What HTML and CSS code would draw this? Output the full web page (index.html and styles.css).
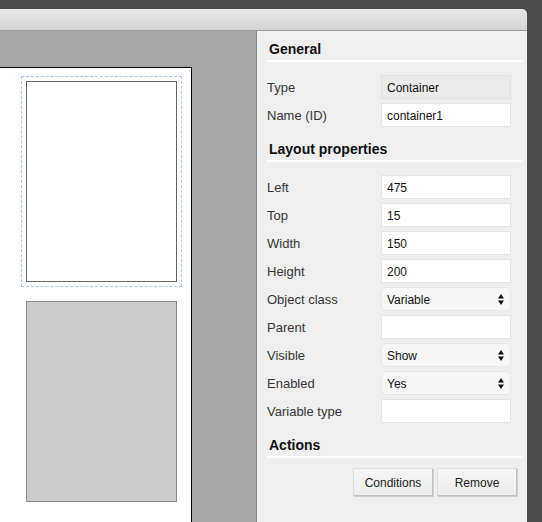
FILE: index.html
```html
<!DOCTYPE html>
<html>
<head>
<meta charset="utf-8">
<link rel="stylesheet" href="styles.css">
</head>
<body>
<div class="window">
  <div class="titlebar"></div>
  <div class="main">
    <div class="canvas">
      <div class="page">
        <div class="selection">
          <div class="container-box"></div>
        </div>
        <div class="gray-box"></div>
      </div>
    </div>
    <div class="panel">
      <div class="section-title">General</div>
      <div class="rows">
        <div class="label">Type</div><div class="field readonly">Container</div>
        <div class="label">Name (ID)</div><div class="field">container1</div>
      </div>
      <div class="section-title">Layout properties</div>
      <div class="rows">
        <div class="label">Left</div><div class="field">475</div>
        <div class="label">Top</div><div class="field">15</div>
        <div class="label">Width</div><div class="field">150</div>
        <div class="label">Height</div><div class="field">200</div>
        <div class="label">Object class</div><div class="field select"><span>Variable</span><svg class="arrows" width="6" height="11" viewBox="0 0 6 11"><path d="M3 0 L6 4.5 L0 4.5 Z M0 6.5 L6 6.5 L3 11 Z" fill="#111"/></svg></div>
        <div class="label">Parent</div><div class="field"></div>
        <div class="label">Visible</div><div class="field select"><span>Show</span><svg class="arrows" width="6" height="11" viewBox="0 0 6 11"><path d="M3 0 L6 4.5 L0 4.5 Z M0 6.5 L6 6.5 L3 11 Z" fill="#111"/></svg></div>
        <div class="label">Enabled</div><div class="field select"><span>Yes</span><svg class="arrows" width="6" height="11" viewBox="0 0 6 11"><path d="M3 0 L6 4.5 L0 4.5 Z M0 6.5 L6 6.5 L3 11 Z" fill="#111"/></svg></div>
        <div class="label">Variable type</div><div class="field"></div>
      </div>
      <div class="section-title">Actions</div>
      <div class="buttons">
        <div class="btn">Conditions</div>
        <div class="btn">Remove</div>
      </div>
    </div>
  </div>
</div>
</body>
</html>
```
FILE: styles.css
```css
html, body {
  margin: 0;
  padding: 0;
  background: #4b4b4b;
  overflow: hidden;
  font-family: "Liberation Sans", Arial, sans-serif;
}
.window {
  margin-top: 9px;
  width: 527px;
  height: 513px;
  border-top-right-radius: 5px;
  overflow: hidden;
  display: flex;
  flex-direction: column;
}
.titlebar {
  height: 21px;
  flex: none;
  background: linear-gradient(#e8e8e8, #d3d3d3);
  border-bottom: 1px solid #9c9c9c;
}
.main {
  flex: 1;
  display: flex;
  min-height: 0;
}
.canvas {
  width: 256px;
  flex: none;
  background: #a6a6a6;
  padding-top: 36px;
  box-sizing: border-box;
  display: flex;
  flex-direction: column;
}
.page {
  flex: 1;
  width: 192px;
  box-sizing: border-box;
  background: #fff;
  border-top: 1px solid #000;
  border-right: 1px solid #000;
  padding: 8px 0 0 21px;
}
.selection {
  width: 161px;
  box-sizing: border-box;
  border: 1px dashed #a3c6f6;
  padding: 4px;
}
.container-box {
  width: 151px;
  height: 201px;
  box-sizing: border-box;
  border: 1px solid #666;
  background: #fff;
}
.gray-box {
  margin: 14px 0 0 5px;
  width: 151px;
  height: 201px;
  box-sizing: border-box;
  border: 1px solid #888;
  background: #ccc;
}
.panel {
  flex: 1;
  background: #efefef;
  border-left: 1px solid #8a8a8a;
  padding: 10px 5px 0 10px;
}
.section-title {
  font-size: 14px;
  font-weight: bold;
  line-height: 17px;
  color: #111;
  padding: 0 0 2px 2px;
  border-bottom: 2px solid #fff;
  margin-bottom: 13px;
}
.rows {
  display: grid;
  grid-template-columns: 114px 130px;
  grid-auto-rows: 24px;
  row-gap: 4px;
  margin-bottom: 14px;
}
.label {
  font-size: 13px;
  color: #363636;
  display: flex;
  align-items: center;
}
.field {
  box-sizing: border-box;
  height: 24px;
  border: 1px solid #e4e4e4;
  background: #fff;
  font-size: 12px;
  color: #111;
  padding: 1px 5px 0;
  display: flex;
  align-items: center;
}
.field.readonly {
  background: #ebebeb;
  border-color: #e1e1e1;
}
.field.select {
  background: #f7f7f7;
  border-color: #e6e6e6;
  border-radius: 5px;
  justify-content: space-between;
  padding-right: 5px;
}
.arrows {
  display: block;
  margin-right: 1px;
}
.buttons {
  display: flex;
  justify-content: flex-end;
  gap: 4px;
  padding-right: 5px;
  margin-top: -3px;
}
.btn {
  width: 80px;
  height: 28px;
  box-sizing: border-box;
  border: 1px solid #dcdcdc;
  border-right-color: #c2c2c2;
  border-bottom-color: #c2c2c2;
  box-shadow: 1px 1px 0 #cfcfcf;
  background: linear-gradient(#f6f6f6, #ececec);
  font-size: 12px;
  color: #222;
  padding-top: 2px;
  display: flex;
  align-items: center;
  justify-content: center;
}
```
